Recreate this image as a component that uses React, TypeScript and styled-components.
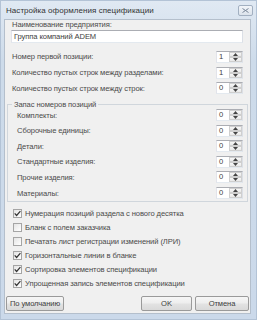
import React from 'react'
import styled, { createGlobalStyle } from 'styled-components'

const GlobalStyle = createGlobalStyle`
  html, body {
    margin: 0;
    padding: 0;
    background: #ffffff;
  }
  body {
    font-family: 'Liberation Sans', Arial, sans-serif;
    color: #4a4a4a;
  }
`

const Window = styled.div`
  width: 257px;
  height: 320px;
  box-sizing: border-box;
  display: flex;
  flex-direction: column;
  border: 1px solid #b3c3d6;
  background: linear-gradient(#e0e9f3, #cddbea 60px, #cbd9ea);
`

const TitleBar = styled.div`
  height: 18px;
  flex: none;
  display: flex;
  align-items: center;
  justify-content: space-between;
  padding: 0 3px 0 5px;
`

const Title = styled.span`
  font-size: 8px;
  color: #333;
  letter-spacing: 0.05px;
`

const CloseButton = styled.div`
  width: 15px;
  height: 11px;
  box-sizing: border-box;
  border: 1px solid #a2b0c1;
  border-radius: 2px;
  background: linear-gradient(#f2f5f9, #dbe3ec);
  display: flex;
  align-items: center;
  justify-content: center;
  margin-top: 1px;
`

const Client = styled.div`
  flex: 1;
  margin: 0 5px 5px 3px;
  border: 1px solid #b4bfcc;
  background: #f0f0f0;
  display: flex;
  flex-direction: column;
  font-size: 7.6px;
  letter-spacing: -0.1px;
`

const TopSection = styled.div`
  padding: 0 7px 0 6px;
  display: flex;
  flex-direction: column;
`

const Caption = styled.div`
  height: 10px;
  line-height: 10px;
  padding-left: 1px;
`

const TextInput = styled.div`
  height: 13px;
  box-sizing: border-box;
  border: 1px solid #abadb3;
  border-color: #abadb3 #dbdfe6 #e3e9ef #e2e3ea;
  background: #ffffff;
  line-height: 11px;
  padding-left: 2px;
  color: #404040;
`

const Rows = styled.div`
  margin-top: 6px;
  display: flex;
  flex-direction: column;
`

const FieldRow = styled.div<{ $h: number }>`
  height: ${p => p.$h}px;
  display: flex;
  align-items: center;
  justify-content: space-between;
  padding-left: 1px;
`

const Spin = styled.div`
  width: 27px;
  height: 12px;
  box-sizing: border-box;
  display: flex;
  border: 1px solid #abadb3;
  border-color: #abadb3 #dbdfe6 #e3e9ef #e2e3ea;
  background: #ffffff;
`

const SpinValue = styled.span`
  flex: 1;
  padding-left: 2px;
  line-height: 10px;
  color: #404040;
`

const SpinButtons = styled.div`
  width: 13px;
  display: flex;
  flex-direction: column;
`

const SpinBtn = styled.div`
  flex: 1;
  box-sizing: border-box;
  border: 1px solid #cfcfcf;
  background: linear-gradient(#f8f8f8, #e8e8e8);
  display: flex;
  align-items: center;
  justify-content: center;
`

const Group = styled.div`
  position: relative;
  margin: 8px 2px 0;
  padding: 2px 4px 0 8px;
  border: 1px solid #d0d6dc;
  display: flex;
  flex-direction: column;
`

const Legend = styled.span`
  position: absolute;
  top: -6px;
  left: 4px;
  padding: 0 2px;
  line-height: 11px;
  background: #f0f0f0;
`

const Checks = styled.div`
  margin-top: 5px;
  padding-left: 8px;
  display: flex;
  flex-direction: column;
`

const CheckRow = styled.div`
  height: 14px;
  display: flex;
  align-items: center;
  gap: 3px;
`

const Box = styled.span`
  width: 9px;
  height: 9px;
  box-sizing: border-box;
  border: 1px solid #a5a5a5;
  background: linear-gradient(135deg, #e4e4e4, #ffffff);
  display: flex;
  align-items: center;
  justify-content: center;
`

const Footer = styled.div`
  margin-top: 5px;
  padding: 0 1px;
  display: flex;
  align-items: center;
  justify-content: space-between;
`

const ButtonGroup = styled.div`
  display: flex;
  gap: 3px;
`

const Button = styled.div<{ $w: number }>`
  width: ${p => p.$w}px;
  height: 15px;
  box-sizing: border-box;
  border: 1px solid #9a9a9a;
  border-radius: 2px;
  background: linear-gradient(#f6f6f6, #eeeeee 45%, #e2e2e2 55%, #d9d9d9);
  display: flex;
  align-items: center;
  justify-content: center;
  color: #404040;
`

const Arrow = ({ up }: { up?: boolean }) => (
  <svg width="5" height="3" viewBox="0 0 5 3">
    <path d={up ? 'M0 3 L2.5 0 L5 3 Z' : 'M0 0 L2.5 3 L5 0 Z'} fill="#444" />
  </svg>
)

const Spinner = ({ value }: { value: string }) => (
  <Spin>
    <SpinValue>{value}</SpinValue>
    <SpinButtons>
      <SpinBtn>
        <Arrow up />
      </SpinBtn>
      <SpinBtn>
        <Arrow />
      </SpinBtn>
    </SpinButtons>
  </Spin>
)

const Check = ({ checked, label }: { checked?: boolean; label: string }) => (
  <CheckRow>
    <Box>
      {checked && (
        <svg width="7" height="7" viewBox="0 0 7 7">
          <path d="M0.7 3.4 L2.6 5.5 L6.4 1.2" stroke="#333" strokeWidth="1.2" fill="none" />
        </svg>
      )}
    </Box>
    <span>{label}</span>
  </CheckRow>
)

const topFields = [
  { label: 'Номер первой позиции:', value: '1' },
  { label: 'Количество пустых строк между разделами:', value: '1' },
  { label: 'Количество пустых строк между строк:', value: '0' },
]

const reserveFields = [
  'Комплекты:',
  'Сборочные единицы:',
  'Детали:',
  'Стандартные изделия:',
  'Прочие изделия:',
  'Материалы:',
]

const options = [
  { label: 'Нумерация позиций раздела с нового десятка', checked: true },
  { label: 'Бланк с полем заказчика', checked: false },
  { label: 'Печатать лист регистрации изменений (ЛРИ)', checked: false },
  { label: 'Горизонтальные линии в бланке', checked: true },
  { label: 'Сортировка элементов спецификации', checked: true },
  { label: 'Упрощенная запись элементов спецификации', checked: true },
]

export default function App() {
  return (
    <>
      <GlobalStyle />
      <Window>
        <TitleBar>
          <Title>Настройка оформления спецификации</Title>
          <CloseButton>
            <svg width="7" height="5" viewBox="0 0 7 5">
              <path d="M0.5 0.5 L6.5 4.5 M6.5 0.5 L0.5 4.5" stroke="#7a889a" strokeWidth="1" />
            </svg>
          </CloseButton>
        </TitleBar>
        <Client>
          <TopSection>
            <Caption>Наименование предприятия:</Caption>
            <TextInput>Группа компаний ADEM</TextInput>
            <Rows>
              {topFields.map(f => (
                <FieldRow key={f.label} $h={15.75}>
                  <span>{f.label}</span>
                  <Spinner value={f.value} />
                </FieldRow>
              ))}
            </Rows>
          </TopSection>
          <Group>
            <Legend>Запас номеров позиций</Legend>
            {reserveFields.map(l => (
              <FieldRow key={l} $h={15.6}>
                <span>{l}</span>
                <Spinner value="0" />
              </FieldRow>
            ))}
          </Group>
          <Checks>
            {options.map(o => (
              <Check key={o.label} label={o.label} checked={o.checked} />
            ))}
          </Checks>
          <Footer>
            <Button $w={58}>По умолчанию</Button>
            <ButtonGroup>
              <Button $w={51}>OK</Button>
              <Button $w={54}>Отмена</Button>
            </ButtonGroup>
          </Footer>
        </Client>
      </Window>
    </>
  )
}
